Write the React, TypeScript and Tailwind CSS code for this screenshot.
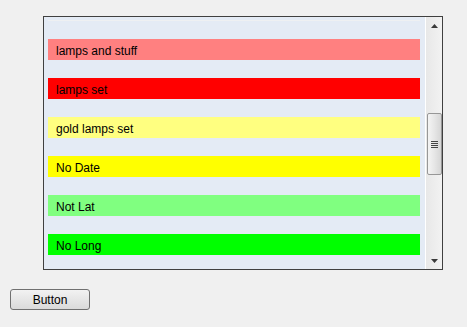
// Owner-drawn list box with coloured rows, a classic vertical scrollbar and a push button below.

const ROWS = [
  { label: 'lamps and stuff', bg: 'bg-[#ff8080]' },
  { label: 'lamps set', bg: 'bg-[#ff0000]' },
  { label: 'gold lamps set', bg: 'bg-[#ffff80]' },
  { label: 'No Date', bg: 'bg-[#ffff00]' },
  { label: 'Not Lat', bg: 'bg-[#80ff80]' },
  { label: 'No Long', bg: 'bg-[#00ff00]' },
]

function ScrollBar() {
  return (
    <div className="flex w-[17px] shrink-0 flex-col border-l border-white bg-gradient-to-r from-[#e8e8e8] to-[#f2f2f2]">
      <div className="flex h-[17px] items-center justify-center">
        <svg width="7" height="4" viewBox="0 0 7 4" aria-hidden>
          <path d="M3.5 0 L7 4 L0 4 Z" fill="#3a3a3a" />
        </svg>
      </div>
      <div className="flex-1 pt-[79px]">
        <div className="mx-auto flex h-[62px] w-[15px] items-center justify-center rounded-[2px] border border-[#979797] bg-gradient-to-r from-[#f4f4f4] via-[#e6e6e6] to-[#d6d6d6]">
          <div className="flex flex-col gap-[1px]">
            <div className="h-[1px] w-[7px] bg-[#444]" />
            <div className="h-[1px] w-[7px] bg-[#444]" />
            <div className="h-[1px] w-[7px] bg-[#444]" />
            <div className="h-[1px] w-[7px] bg-[#444]" />
          </div>
        </div>
      </div>
      <div className="flex h-[17px] items-center justify-center">
        <svg width="7" height="4" viewBox="0 0 7 4" aria-hidden>
          <path d="M0 0 L7 0 L3.5 4 Z" fill="#3a3a3a" />
        </svg>
      </div>
    </div>
  )
}

export default function App() {
  return (
    <div className="h-[327px] w-[467px] bg-[#f0f0f0] pt-4 font-['Liberation_Sans',Arial,sans-serif] text-[12px] text-black">
      <div className="ml-[43px] flex h-[254px] w-[400px] border border-[#404040]">
        <div className="flex flex-1 flex-col overflow-hidden bg-[#e4ebf5] px-1 pt-[3px]">
          <div className="h-[1px] w-[372px] bg-[#eef0f2]" />
          {ROWS.map((row) => (
            <div
              key={row.label}
              className={`mt-[18px] flex h-[21px] w-[372px] shrink-0 items-center pl-2 pt-[3px] ${row.bg}`}
            >
              {row.label}
            </div>
          ))}
        </div>
        <ScrollBar />
      </div>
      <button
        type="button"
        className="ml-[10px] mt-[19px] h-[21px] w-[80px] rounded-[3px] border border-[#707070] bg-gradient-to-b from-[#f2f2f2] to-[#dadada] pt-[1px] text-[12px] leading-none"
      >
        Button
      </button>
    </div>
  )
}
